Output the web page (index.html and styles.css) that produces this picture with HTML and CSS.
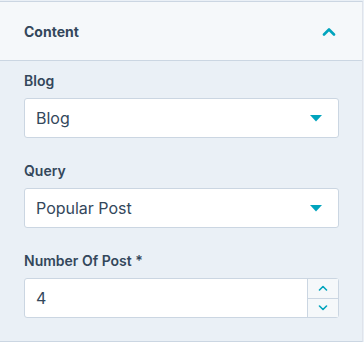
FILE: index.html
```html
<!DOCTYPE html>
<html lang="en">
<head>
  <meta charset="UTF-8" />
  <meta name="viewport" content="width=device-width, initial-scale=1.0" />
  <title>Content</title>
  <link rel="stylesheet" href="styles.css">
</head>
<body>
  <div class="panel">
    <div class="panel-head">
      <span class="panel-title">Content</span>
      <svg class="chevron" width="14" height="9" viewBox="0 0 14 9">
        <path d="M2 7.5 L7 2.5 L12 7.5" fill="none" stroke="#00a4bd" stroke-width="2.6" stroke-linecap="round" stroke-linejoin="round" />
      </svg>
    </div>

    <div class="panel-body">
      <div class="field">
        <label class="field-label">Blog</label>
        <div class="select">
          <span>Blog</span>
          <svg width="12" height="7" viewBox="0 0 12 7"><path d="M0 0 H12 L6 6.5 Z" fill="#00a4bd" /></svg>
        </div>
      </div>

      <div class="field">
        <label class="field-label">Query</label>
        <div class="select">
          <span>Popular Post</span>
          <svg width="12" height="7" viewBox="0 0 12 7"><path d="M0 0 H12 L6 6.5 Z" fill="#00a4bd" /></svg>
        </div>
      </div>

      <div class="field">
        <label class="field-label">Number Of Post *</label>
        <div class="number">
          <span class="number-value">4</span>
          <div class="spinner">
            <button class="spin">
              <svg width="10" height="6" viewBox="0 0 10 6"><path d="M1.5 5 L5 1.5 L8.5 5" fill="none" stroke="#00a4bd" stroke-width="1.6" stroke-linecap="round" stroke-linejoin="round" /></svg>
            </button>
            <button class="spin">
              <svg width="10" height="6" viewBox="0 0 10 6"><path d="M1.5 1 L5 4.5 L8.5 1" fill="none" stroke="#00a4bd" stroke-width="1.6" stroke-linecap="round" stroke-linejoin="round" /></svg>
            </button>
          </div>
        </div>
      </div>
    </div>
  </div>
</body>
</html>
```

FILE: styles.css
```css
body, html {
  margin: 0;
  padding: 0;
  background: #eaf0f6;
  font-family: Inter, 'Noto Sans', sans-serif;
  color: #33475b;
}

.panel {
  width: 362px;
  margin-top: 1px;
  border-top: 1px solid #cbd6e2;
  border-right: 1px solid #dfe3eb;
  border-bottom: 1px solid #cbd6e2;
}

.panel-head {
  height: 58px;
  padding: 0 26px 0 24px;
  display: flex;
  align-items: center;
  justify-content: space-between;
  background: #f5f8fa;
  border-bottom: 1px solid #cbd6e2;
}

.panel-title {
  font-size: 14px;
  font-weight: 700;
}

.panel-body {
  padding: 10px 23px 23px 24px;
  display: flex;
  flex-direction: column;
  gap: 23px;
}

.field {
  display: flex;
  flex-direction: column;
  gap: 7px;
}

.field-label {
  font-size: 14px;
  font-weight: 600;
  line-height: 20px;
}

.select, .number {
  height: 38px;
  background: #fff;
  border: 1px solid #cbd6e2;
  border-radius: 3px;
  font-size: 16px;
  display: flex;
  align-items: center;
}

.select {
  padding: 0 16px 0 11px;
  justify-content: space-between;
}

.number-value {
  flex: 1;
  padding-left: 11px;
}

.spinner {
  width: 30px;
  height: 100%;
  display: flex;
  flex-direction: column;
  border-left: 1px solid #cbd6e2;
  background: #f5f8fa;
}

.spin {
  flex: 1;
  padding: 0;
  border: none;
  background: transparent;
  display: flex;
  align-items: center;
  justify-content: center;
}

.spin + .spin {
  border-top: 1px solid #cbd6e2;
}
```
